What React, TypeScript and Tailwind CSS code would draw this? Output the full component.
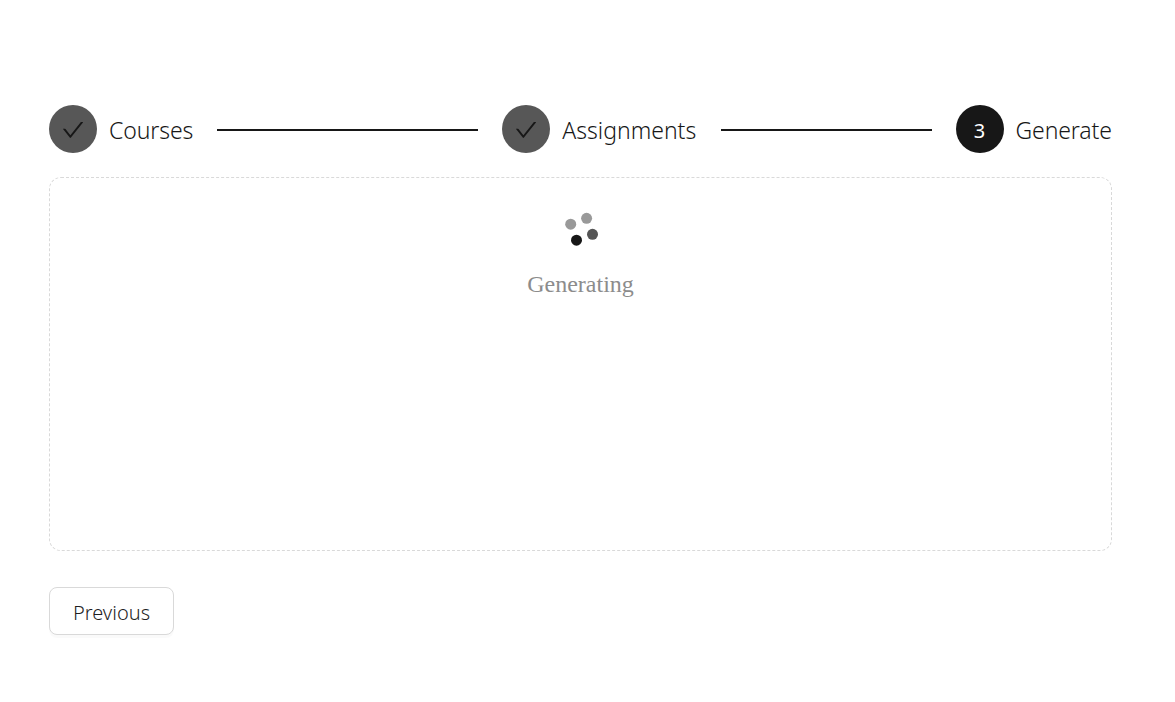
import React from "react";

const check =
  "M912 190h-69.900c-9.800 0-19.100 4.500-25.100 12.200L404.700 724.500 207 474a32 32 0 0 0-25.100-12.200H112c-6.700 0-10.400 7.700-6.300 12.900l273.900 347c12.800 16.200 37.400 16.200 50.300 0l488.400-618.900c4.100-5.100.4-12.800-6.300-12.800z";

type StepProps = { n: number; title: string; label: string; done?: boolean; last?: boolean };

function Step({ n, title, label, done, last }: StepProps) {
  return (
    <div className={last ? "flex items-center" : "flex min-w-0 flex-1 items-center pr-6"}>
      <div
        className={
          done
            ? "flex size-12 shrink-0 items-center justify-center rounded-full bg-[#575757] text-[#171717]"
            : "flex size-12 shrink-0 items-center justify-center rounded-full bg-[#171717] text-white"
        }
      >
        {done ? (
          <svg viewBox="64 64 896 896" className="mt-0.5 size-[22px]" fill="currentColor">
            <path d={check} />
          </svg>
        ) : (
          <span className="pt-[3px] text-[20px] leading-none">{n}</span>
        )}
      </div>
      <span className={`ml-3 whitespace-nowrap pt-0.5 text-[23px] leading-8 ${label}`}>{title}</span>
      {!last && <div className="ml-6 mt-0.5 h-0.5 flex-1 bg-[#171717]" />}
    </div>
  );
}

export default function App() {
  return (
    <main className="flex h-[702px] flex-col bg-white pl-[49px] pr-[63px] pt-[105px] font-['Noto_Sans',sans-serif] text-[#171717]">
      <div className="flex h-12 items-center">
        <Step n={1} title="Courses" label="w-[84px] font-[350] tracking-[-0.1px]" done />
        <Step n={2} title="Assignments" label="w-[135px] font-[350]" done />
        <Step n={3} title="Generate" label="w-[96.5px] font-[350] tracking-[-0.1px]" last />
      </div>
      <section className="mt-6 flex h-[374px] flex-col items-center rounded-xl border border-dashed border-[#d9d9d9] pt-[34px]">
        <svg className="size-9" viewBox="0 0 36 36">
          <circle cx="7.700" cy="12.200" r="5.500" fill="#999" />
          <circle cx="23.600" cy="6.300" r="5.500" fill="#999" />
          <circle cx="29.500" cy="22.300" r="5.500" fill="#555" />
          <circle cx="13.500" cy="28.200" r="5.500" fill="#171717" />
        </svg>
        <span className="mt-[18px] font-['Liberation_Serif',serif] text-[24px] leading-9 text-[#8c8c8c]">Generating</span>
      </section>
      <button className="mt-9 h-12 w-[125px] rounded-lg border border-[#d9d9d9] bg-white pt-1 text-[20px] font-[350] text-[#1f1f1f] shadow-[0_3px_0_rgba(0,0,0,0.02)]">
        Previous
      </button>
    </main>
  );
}
